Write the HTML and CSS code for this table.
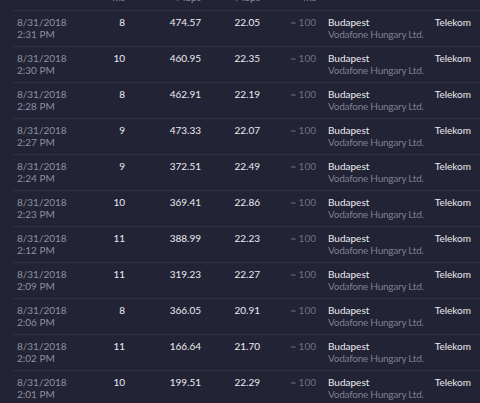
FILE: index.html
```html
<!DOCTYPE html>
<html>
<head>
<meta charset="utf-8">
<link rel="stylesheet" href="styles.css">
</head>
<body>
<div class="table">
  <div class="row head">
    <div class="c date"></div>
    <div class="c num">ms</div>
    <div class="c num">Mbps</div>
    <div class="c num">Mbps</div>
    <div class="c num">ms</div>
    <div class="c loc"></div>
    <div class="c isp"></div>
  </div>
  <div class="row"><div class="c date"><div>8/31/2018</div><div>2:31 PM</div></div><div class="c num">8</div><div class="c num">474.57</div><div class="c num">22.05</div><div class="c num dim">~ 100</div><div class="c loc"><div>Budapest</div><div class="sub">Vodafone Hungary Ltd.</div></div><div class="c isp">Telekom</div></div>
  <div class="row"><div class="c date"><div>8/31/2018</div><div>2:30 PM</div></div><div class="c num">10</div><div class="c num">460.95</div><div class="c num">22.35</div><div class="c num dim">~ 100</div><div class="c loc"><div>Budapest</div><div class="sub">Vodafone Hungary Ltd.</div></div><div class="c isp">Telekom</div></div>
  <div class="row"><div class="c date"><div>8/31/2018</div><div>2:28 PM</div></div><div class="c num">8</div><div class="c num">462.91</div><div class="c num">22.19</div><div class="c num dim">~ 100</div><div class="c loc"><div>Budapest</div><div class="sub">Vodafone Hungary Ltd.</div></div><div class="c isp">Telekom</div></div>
  <div class="row"><div class="c date"><div>8/31/2018</div><div>2:27 PM</div></div><div class="c num">9</div><div class="c num">473.33</div><div class="c num">22.07</div><div class="c num dim">~ 100</div><div class="c loc"><div>Budapest</div><div class="sub">Vodafone Hungary Ltd.</div></div><div class="c isp">Telekom</div></div>
  <div class="row"><div class="c date"><div>8/31/2018</div><div>2:24 PM</div></div><div class="c num">9</div><div class="c num">372.51</div><div class="c num">22.49</div><div class="c num dim">~ 100</div><div class="c loc"><div>Budapest</div><div class="sub">Vodafone Hungary Ltd.</div></div><div class="c isp">Telekom</div></div>
  <div class="row"><div class="c date"><div>8/31/2018</div><div>2:23 PM</div></div><div class="c num">10</div><div class="c num">369.41</div><div class="c num">22.86</div><div class="c num dim">~ 100</div><div class="c loc"><div>Budapest</div><div class="sub">Vodafone Hungary Ltd.</div></div><div class="c isp">Telekom</div></div>
  <div class="row"><div class="c date"><div>8/31/2018</div><div>2:12 PM</div></div><div class="c num">11</div><div class="c num">388.99</div><div class="c num">22.23</div><div class="c num dim">~ 100</div><div class="c loc"><div>Budapest</div><div class="sub">Vodafone Hungary Ltd.</div></div><div class="c isp">Telekom</div></div>
  <div class="row"><div class="c date"><div>8/31/2018</div><div>2:09 PM</div></div><div class="c num">11</div><div class="c num">319.23</div><div class="c num">22.27</div><div class="c num dim">~ 100</div><div class="c loc"><div>Budapest</div><div class="sub">Vodafone Hungary Ltd.</div></div><div class="c isp">Telekom</div></div>
  <div class="row"><div class="c date"><div>8/31/2018</div><div>2:06 PM</div></div><div class="c num">8</div><div class="c num">366.05</div><div class="c num">20.91</div><div class="c num dim">~ 100</div><div class="c loc"><div>Budapest</div><div class="sub">Vodafone Hungary Ltd.</div></div><div class="c isp">Telekom</div></div>
  <div class="row"><div class="c date"><div>8/31/2018</div><div>2:02 PM</div></div><div class="c num">11</div><div class="c num">166.64</div><div class="c num">21.70</div><div class="c num dim">~ 100</div><div class="c loc"><div>Budapest</div><div class="sub">Vodafone Hungary Ltd.</div></div><div class="c isp">Telekom</div></div>
  <div class="row"><div class="c date"><div>8/31/2018</div><div>2:01 PM</div></div><div class="c num">10</div><div class="c num">199.51</div><div class="c num">22.29</div><div class="c num dim">~ 100</div><div class="c loc"><div>Budapest</div><div class="sub">Vodafone Hungary Ltd.</div></div><div class="c isp">Telekom</div></div>
</div>
</body>
</html>
```
FILE: styles.css
```css
html, body {
  margin: 0;
  padding: 0;
  background: #222334;
  height: 100%;
  overflow: hidden;
}
body {
  font-family: "Lato", "Liberation Sans", sans-serif;
  font-size: 10px;
  color: #ececf2;
}
.table {
  margin-left: 13px;
  margin-top: -26px;
}
.row {
  display: grid;
  grid-template-columns: 78px 30px 76px 59px 56px 1fr auto;
  border-top: 1px solid #30314a;
  padding: 5px 9px 6px 4px;
  height: 24px;
  line-height: 12px;
}
.row.head {
  border-top: none;
  padding-top: 17px;
  padding-bottom: 0;
  height: 19px;
  color: #8a8b9b;
}
.c.date {
  color: #8f90a0;
}
.c.num {
  text-align: right;
}
.c.dim {
  color: #6f7082;
}
.c.loc {
  padding-left: 12px;
}
.sub {
  color: #7e7f90;
  letter-spacing: -0.25px;
}
.c.isp {
  text-align: right;
}
```
